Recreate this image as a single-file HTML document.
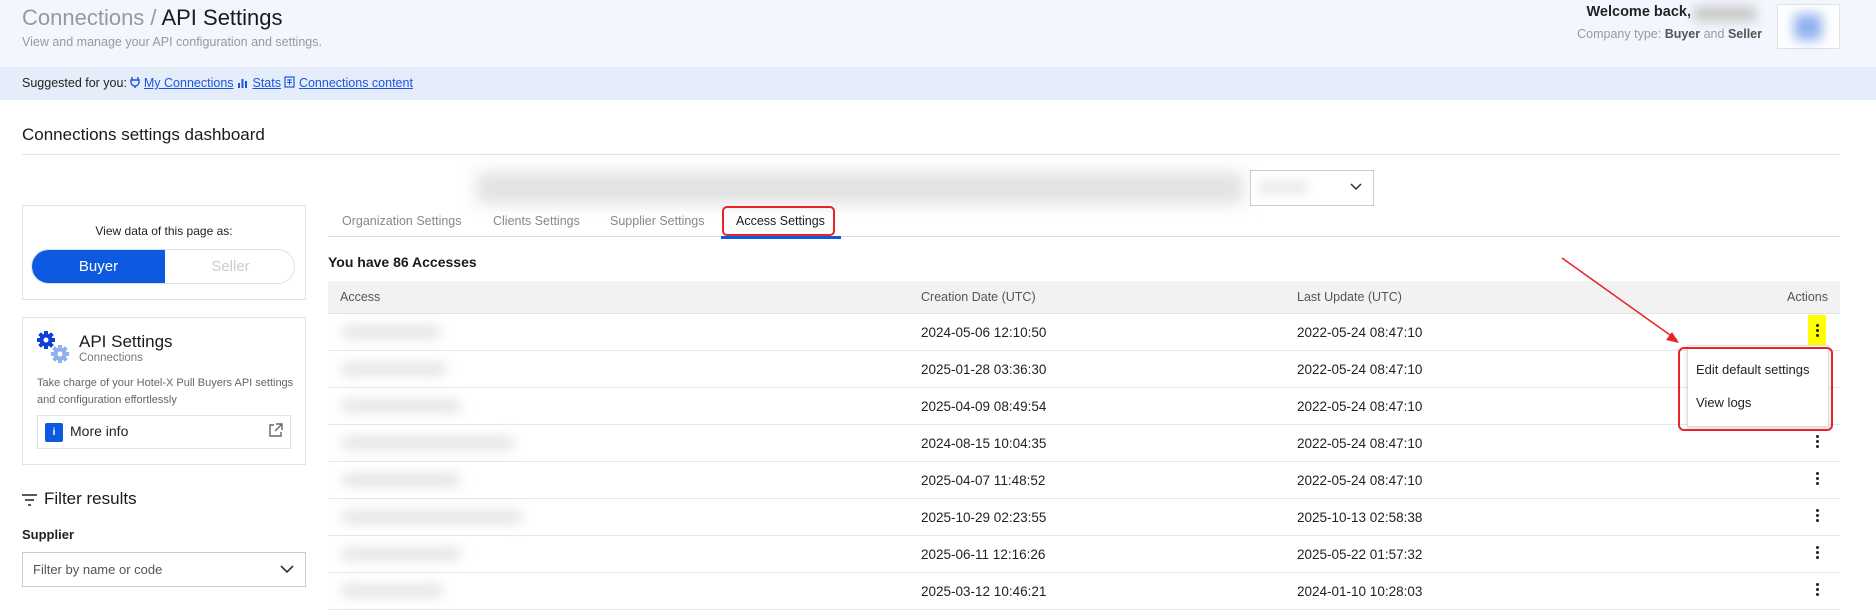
<!DOCTYPE html>
<html><head><meta charset="utf-8"><style>
*{box-sizing:border-box;margin:0;padding:0}
body{width:1876px;height:604px;overflow:hidden;background:#fff;font-family:"Liberation Sans",Arial,sans-serif;color:#222;position:relative}
.a{position:absolute;white-space:nowrap}
.blur{position:absolute;background:#d6d6d6;filter:blur(5px);border-radius:4px}
.row .blur{background:#e2e2e2;filter:blur(6px)}
.row{position:absolute;left:328px;width:1512px;height:37px;border-bottom:1px solid #e6e6e6;font-size:13.5px;color:#222}
.row span{position:absolute;top:11px}
.dots{position:absolute;left:1488px;top:10px;width:3px}
.dots i{display:block;width:3px;height:3px;background:#222;border-radius:50%;margin-bottom:2px}
</style></head><body>
<div class="a" style="left:0;top:0;width:1876px;height:67px;background:#f2f6fe"></div>
<div class="a" style="left:22px;top:5px;font-size:22px;color:#999">Connections <span style="color:#999">/</span> <span style="color:#1a1a1a">API Settings</span></div>
<div class="a" style="left:22px;top:35px;font-size:12.5px;color:#999">View and manage your API configuration and settings.</div>
<div class="a" style="right:185px;top:4px;font-size:14.5px;font-weight:bold;color:#222">Welcome back,</div>
<div class="blur" style="left:1694px;top:6px;width:62px;height:16px;background:#ccc"></div>
<div class="a" style="right:114px;top:27px;font-size:12.5px;color:#999">Company type: <b style="color:#555">Buyer</b> and <b style="color:#555">Seller</b></div>
<div class="a" style="left:1777px;top:4px;width:63px;height:45px;border:1px solid #e2e2e2;background:#fff"></div>
<div class="blur" style="left:1794px;top:14px;width:28px;height:26px;background:#8fb0f0;filter:blur(6px)"></div>
<div class="a" style="left:0;top:67px;width:1876px;height:33px;background:#e6edfa"></div>
<div class="a" style="left:22px;top:76px;font-size:12.5px;color:#222">Suggested for you: <svg width="10" height="12" style="vertical-align:-1px"><path d="M2 1v3M8 1v3M1 4h8v2a4 4 0 0 1-8 0zM5 10v2" stroke="#1a56db" stroke-width="1.4" fill="none"/></svg> <u style="color:#1a56db">My Connections</u> <svg width="12" height="11" style="vertical-align:-1px"><path d="M1 11V6h2v5M4.5 11V2h2v9M8 11V4h2v7" fill="#1a56db"/></svg> <u style="color:#1a56db">Stats</u> <svg width="11" height="12" style="vertical-align:-1px"><rect x="1" y="1" width="9" height="10" stroke="#1a56db" fill="none" stroke-width="1.2"/><path d="M3 4h5M3 6.5h5M5.5 3v6" stroke="#1a56db"/></svg> <u style="color:#1a56db">Connections content</u></div>
<div class="a" style="left:22px;top:125px;font-size:17px;color:#1a1a1a">Connections settings dashboard</div>
<div class="a" style="left:22px;top:154px;width:1818px;height:1px;background:#e2e2e2"></div>
<div class="blur" style="left:476px;top:172px;width:768px;height:32px;background:#e2e2e2;filter:blur(8px)"></div>
<div class="a" style="left:1250px;top:170px;width:124px;height:36px;border:1px solid #ccc;background:#fff"></div>
<div class="blur" style="left:1258px;top:180px;width:50px;height:14px;background:#ececec"></div>
<svg class="a" style="left:1350px;top:183px" width="12" height="8"><path d="M1 1l5 5 5-5" stroke="#333" stroke-width="1.5" fill="none"/></svg>
<!-- left card -->
<div class="a" style="left:22px;top:205px;width:284px;height:95px;border:1px solid #e2e2e2"></div>
<div class="a" style="left:22px;top:224px;width:284px;text-align:center;font-size:12px;color:#222">View data of this page as:</div>
<div class="a" style="left:31px;top:249px;width:264px;height:35px;border:1px solid #d8e2f5;border-radius:18px;overflow:hidden">
<div style="position:absolute;left:0;top:0;width:133px;height:35px;background:#0d5ae0;color:#fff;font-size:15px;text-align:center;line-height:33px">Buyer</div>
<div style="position:absolute;left:133px;top:0;width:131px;height:35px;color:#ccc;font-size:15px;text-align:center;line-height:33px">Seller</div></div>
<div class="a" style="left:22px;top:317px;width:284px;height:148px;border:1px solid #e2e2e2"></div>
<svg class="a" style="left:36px;top:330px" width="36" height="36" viewBox="0 0 36 36"><g fill="#0d3fd0"><circle cx="10" cy="10" r="6.5"/><rect x="8" y="1" width="4" height="18"/><rect x="1" y="8" width="18" height="4"/><rect x="8" y="1" width="4" height="18" transform="rotate(45 10 10)"/><rect x="8" y="1" width="4" height="18" transform="rotate(-45 10 10)"/></g><circle cx="10" cy="10" r="2.5" fill="#fff"/><g fill="#8fb0f0"><circle cx="24" cy="24" r="6.5"/><rect x="22" y="15" width="4" height="18"/><rect x="15" y="22" width="18" height="4"/><rect x="22" y="15" width="4" height="18" transform="rotate(45 24 24)"/><rect x="22" y="15" width="4" height="18" transform="rotate(-45 24 24)"/></g><circle cx="24" cy="24" r="2.5" fill="#fff"/></svg>
<div class="a" style="left:79px;top:332px;font-size:17px;color:#1a1a1a">API Settings</div>
<div class="a" style="left:79px;top:352px;font-size:11.5px;color:#777">Connections</div>
<div class="a" style="left:37px;top:375px;font-size:11px;color:#666;line-height:17px">Take charge of your Hotel-X Pull Buyers API settings<br>and configuration effortlessly</div>
<div class="a" style="left:37px;top:415px;width:254px;height:34px;border:1px solid #e2e2e2"></div>
<div class="a" style="left:45px;top:423px;width:18px;height:19px;background:#0d5ae0;border-radius:2px;color:#fff;font-size:10px;font-weight:bold;text-align:center;line-height:19px">i</div>
<div class="a" style="left:70px;top:423px;font-size:14px;color:#222">More info</div>
<svg class="a" style="left:268px;top:423px" width="15" height="15"><path d="M6 2H2v11h11V9M8 1h6v6M14 1L7 8" stroke="#666" stroke-width="1.4" fill="none"/></svg>
<svg class="a" style="left:22px;top:493px" width="15" height="14"><path d="M0 2h15M3 7h9M6 12h3" stroke="#222" stroke-width="1.6"/></svg>
<div class="a" style="left:44px;top:489px;font-size:17px;color:#1a1a1a">Filter results</div>
<div class="a" style="left:22px;top:527px;font-size:13px;font-weight:bold;color:#222">Supplier</div>
<div class="a" style="left:22px;top:552px;width:284px;height:35px;border:1px solid #ccc"></div>
<div class="a" style="left:33px;top:562px;font-size:13px;color:#555">Filter by name or code</div>
<svg class="a" style="left:280px;top:565px" width="14" height="9"><path d="M1 1l6 6 6-6" stroke="#333" stroke-width="1.6" fill="none"/></svg>
<!-- tabs -->
<div class="a" style="left:328px;top:236px;width:1512px;height:1px;background:#ddd"></div>
<div class="a" style="left:342px;top:214px;font-size:12.5px;color:#888">Organization Settings</div>
<div class="a" style="left:493px;top:214px;font-size:12.5px;color:#888">Clients Settings</div>
<div class="a" style="left:610px;top:214px;font-size:12.5px;color:#888">Supplier Settings</div>
<div class="a" style="left:736px;top:214px;font-size:12.5px;color:#1a1a1a">Access Settings</div>
<div class="a" style="left:722px;top:206px;width:113px;height:30px;border:2px solid #e8232a;border-radius:5px"></div>
<div class="a" style="left:721px;top:236px;width:120px;height:3px;background:#0d5ae0"></div>
<div class="a" style="left:328px;top:254px;font-size:14px;font-weight:bold;color:#1a1a1a">You have 86 Accesses</div>
<!-- table -->
<div class="a" style="left:328px;top:281px;width:1512px;height:33px;background:#f2f2f2;border-bottom:1px solid #e2e2e2;font-size:12.5px;color:#555">
<span style="position:absolute;left:12px;top:9px">Access</span>
<span style="position:absolute;left:593px;top:9px">Creation Date (UTC)</span>
<span style="position:absolute;left:969px;top:9px">Last Update (UTC)</span>
<span style="position:absolute;right:12px;top:9px">Actions</span></div>
<div class="row" style="top:314px"><div class="blur" style="left:14px;top:12px;width:98px;height:12px"></div><span style="left:593px">2024-05-06 12:10:50</span><span style="left:969px">2022-05-24 08:47:10</span><div style="position:absolute;left:1480px;top:1px;width:18px;height:32px;background:#ffff00"></div><div class="dots" style="left:1488px"><i></i><i></i><i></i></div></div>
<div class="row" style="top:351px"><div class="blur" style="left:14px;top:12px;width:104px;height:12px"></div><span style="left:593px">2025-01-28 03:36:30</span><span style="left:969px">2022-05-24 08:47:10</span></div>
<div class="row" style="top:388px"><div class="blur" style="left:14px;top:12px;width:118px;height:12px"></div><span style="left:593px">2025-04-09 08:49:54</span><span style="left:969px">2022-05-24 08:47:10</span></div>
<div class="row" style="top:425px"><div class="blur" style="left:14px;top:12px;width:172px;height:12px"></div><span style="left:593px">2024-08-15 10:04:35</span><span style="left:969px">2022-05-24 08:47:10</span><div class="dots"><i></i><i></i><i></i></div></div>
<div class="row" style="top:462px"><div class="blur" style="left:14px;top:12px;width:118px;height:12px"></div><span style="left:593px">2025-04-07 11:48:52</span><span style="left:969px">2022-05-24 08:47:10</span><div class="dots"><i></i><i></i><i></i></div></div>
<div class="row" style="top:499px"><div class="blur" style="left:14px;top:12px;width:180px;height:12px"></div><span style="left:593px">2025-10-29 02:23:55</span><span style="left:969px">2025-10-13 02:58:38</span><div class="dots"><i></i><i></i><i></i></div></div>
<div class="row" style="top:536px"><div class="blur" style="left:14px;top:12px;width:118px;height:12px"></div><span style="left:593px">2025-06-11 12:16:26</span><span style="left:969px">2025-05-22 01:57:32</span><div class="dots"><i></i><i></i><i></i></div></div>
<div class="row" style="top:573px"><div class="blur" style="left:14px;top:12px;width:100px;height:12px"></div><span style="left:593px">2025-03-12 10:46:21</span><span style="left:969px">2024-01-10 10:28:03</span><div class="dots"><i></i><i></i><i></i></div></div>
<!-- menu -->
<div class="a" style="left:1687px;top:345px;width:142px;height:82px;background:#fff;border:1px solid #ddd;box-shadow:0 2px 4px rgba(0,0,0,.15)"></div>
<div class="a" style="left:1696px;top:362px;font-size:13px;color:#222">Edit default settings</div>
<div class="a" style="left:1696px;top:395px;font-size:13px;color:#222">View logs</div>
<div class="a" style="left:1678px;top:347px;width:155px;height:84px;border:2px solid #e8232a;border-radius:6px"></div>
<svg class="a" style="left:1550px;top:250px" width="140" height="105"><path d="M12 8L127 90" stroke="#e8232a" stroke-width="1.5"/><path d="M129 93l-13-3 6-8z" fill="#e8232a"/></svg>
</body></html>
